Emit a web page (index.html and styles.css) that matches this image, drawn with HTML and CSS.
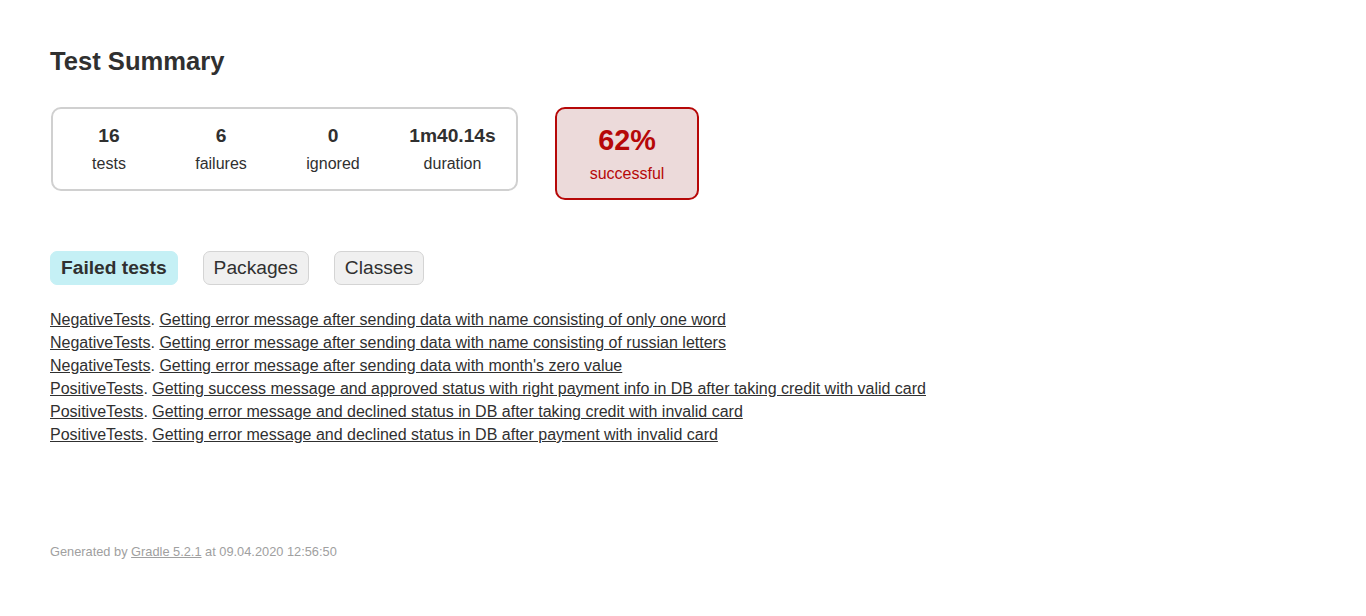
FILE: index.html
```html
<!DOCTYPE html>
<html>
<head>
<meta charset="utf-8">
<title>Test results - Test Summary</title>
<link rel="stylesheet" href="styles.css">
</head>
<body>
<div class="content">
  <h1 class="title">Test Summary</h1>
  <div class="summary">
    <div class="summary-group">
      <div class="info-box">
        <div class="counter">16</div>
        <p class="label">tests</p>
      </div>
      <div class="info-box">
        <div class="counter">6</div>
        <p class="label">failures</p>
      </div>
      <div class="info-box">
        <div class="counter">0</div>
        <p class="label">ignored</p>
      </div>
      <div class="info-box info-box-wide">
        <div class="counter">1m40.14s</div>
        <p class="label">duration</p>
      </div>
    </div>
    <div class="info-box success-rate failures">
      <div class="percent">62%</div>
      <p class="label">successful</p>
    </div>
  </div>
  <ul class="tab-links">
    <li class="tab selected"><a class="tab-link" href="#tab0">Failed tests</a></li>
    <li class="tab"><a class="tab-link" href="#tab1">Packages</a></li>
    <li class="tab"><a class="tab-link" href="#tab2">Classes</a></li>
  </ul>
  <ul class="link-list">
    <li class="link-item"><a class="link" href="#">NegativeTests</a>. <a class="link" href="#">Getting error message after sending data with name consisting of only one word</a></li>
    <li class="link-item"><a class="link" href="#">NegativeTests</a>. <a class="link" href="#">Getting error message after sending data with name consisting of russian letters</a></li>
    <li class="link-item"><a class="link" href="#">NegativeTests</a>. <a class="link" href="#">Getting error message after sending data with month's zero value</a></li>
    <li class="link-item"><a class="link" href="#">PositiveTests</a>. <a class="link" href="#">Getting success message and approved status with right payment info in DB after taking credit with valid card</a></li>
    <li class="link-item"><a class="link" href="#">PositiveTests</a>. <a class="link" href="#">Getting error message and declined status in DB after taking credit with invalid card</a></li>
    <li class="link-item"><a class="link" href="#">PositiveTests</a>. <a class="link" href="#">Getting error message and declined status in DB after payment with invalid card</a></li>
  </ul>
  <div class="footer">
    <p class="footer-text">Generated by <a class="footer-link" href="#">Gradle 5.2.1</a> at 09.04.2020 12:56:50</p>
  </div>
</div>
</body>
</html>
```

FILE: styles.css
```css
body {
  margin: 0;
  padding: 0;
  font-family: "Liberation Sans", Arial, sans-serif;
  font-size: 16px;
  color: #303030;
  background: #ffffff;
}

a {
  color: #303030;
}

.content {
  padding: 30px 50px;
}

.title {
  font-size: 25.6px;
  font-weight: bold;
  margin: 17px 0 10px;
  white-space: nowrap;
}

.summary {
  display: flex;
  align-items: flex-start;
  padding: 1px;
  margin: 30px 0 40px;
}

.summary-group {
  display: flex;
  border: solid 2px #d0d0d0;
  border-radius: 10px;
}

.info-box {
  width: 110px;
  margin: 1px;
  padding: 15px 0;
  text-align: center;
}

.info-box-wide {
  width: 125px;
}

.counter,
.percent {
  font-size: 19.2px;
  font-weight: bold;
  margin-bottom: 8px;
}

.label {
  margin: 0;
}

.success-rate {
  width: 140px;
  margin: 0 0 0 37px;
  border: solid 2px #b60808;
  border-radius: 10px;
  background-color: #ecdada;
  color: #b60808;
}

.success-rate .percent {
  font-size: 28.8px;
}

.tab-links {
  display: flex;
  gap: 25px;
  list-style: none;
  padding: 10px 0;
  margin: 0 0 16px;
}

.tab {
  padding: 5px 10px;
  border: solid 1px #d4d4d4;
  border-radius: 7px;
  background-color: #f0f0f0;
}

.tab.selected {
  background-color: #c5f0f5;
  border-color: #c5f0f5;
}

.tab-link {
  display: block;
  font-size: 19.2px;
  text-decoration: none;
  color: #303030;
}

.tab.selected .tab-link {
  font-weight: bold;
}

.link-list {
  list-style: none;
  padding: 0;
  margin: 16px 0;
}

.link-item {
  margin-bottom: 5px;
  white-space: nowrap;
}

.footer {
  margin-top: 100px;
  font-size: 12.8px;
  white-space: nowrap;
}

.footer-text {
  margin: 12.8px 0;
  color: #a0a0a0;
}

.footer-link {
  color: #a0a0a0;
}
```
